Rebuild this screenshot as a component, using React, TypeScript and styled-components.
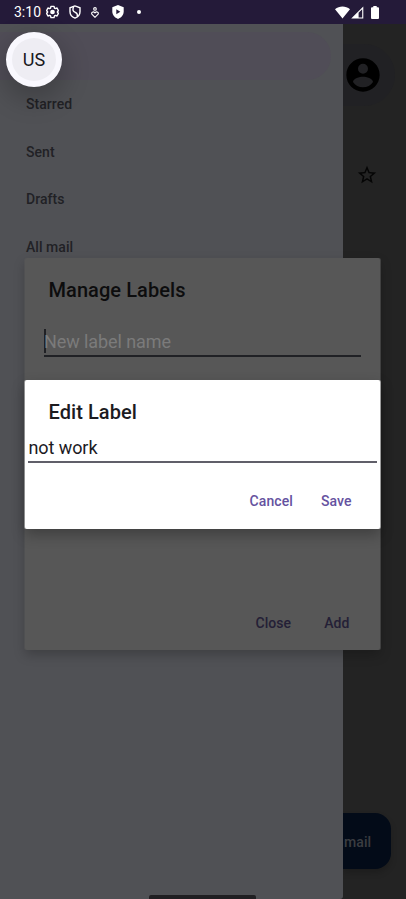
import React from "react";
import styled, { createGlobalStyle } from "styled-components";

const GlobalStyle = createGlobalStyle`
  *, *::before, *::after { box-sizing: border-box; }
  body { margin: 0; background: #232323; font-family: Roboto, "Noto Sans", sans-serif; overflow: hidden; }
`;

const Screen = styled.div`
  position: relative;
  width: 406px;
  height: 899px;
  overflow: hidden;
  display: grid;
  grid-template-rows: 24px 1fr;
`;

const StatusBar = styled.header`
  background: #241a39;
  color: #fff;
  display: flex;
  align-items: center;
  justify-content: space-between;
  padding: 0 27px 0 14px;
`;

const StatusGroup = styled.div<{ $gap: number }>`
  display: flex;
  align-items: center;
  gap: ${(p) => p.$gap}px;
  svg { display: block; }
`;

const Clock = styled.span`
  font-size: 14px;
  line-height: 24px;
  width: 32px;
  margin-right: -5px;
  white-space: nowrap;
`;

const Dot = styled.span`
  width: 4px;
  height: 4px;
  border-radius: 50%;
  background: #fff;
  margin-left: 0;
`;

const Body = styled.div`
  display: grid;
  grid-template-columns: 343px 63px;
  min-height: 0;
`;

const Drawer = styled.nav`
  position: relative;
  z-index: 1;
  background: #505155;
  border-radius: 0 0 3px 0;
  padding-top: 8px;
  display: flex;
  flex-direction: column;
`;

const ActiveItem = styled.div`
  height: 48px;
  margin-right: 12px;
  border-radius: 0 24px 24px 0;
  background: #504d57;
`;

const NavItem = styled.div`
  height: 47.7px;
  display: flex;
  align-items: center;
  padding-left: 26px;
  font-size: 14px;
  font-weight: 500;
  letter-spacing: 0.05px;
  color: #212125;
`;

const Mailbox = styled.main`
  background: #232323;
  display: flex;
  flex-direction: column;
  align-items: flex-start;
`;

const SearchEnd = styled.div`
  width: 52px;
  height: 62px;
  margin-top: 20px;
  border-radius: 0 31px 31px 0;
  background: #212124;
  display: flex;
  align-items: center;
  svg { display: block; }
`;

const StarSlot = styled.div`
  margin: 58px 0 0 13px;
  height: 22px;
  svg { display: block; }
`;

const Compose = styled.button`
  border: 0;
  margin: auto 0 30px;
  width: 48px;
  height: 56px;
  border-radius: 0 16px 16px 0;
  background: #030b18;
  color: #3b3d41;
  font: 500 14px/54px Roboto, sans-serif;
  letter-spacing: 0.1px;
  padding: 2px 0 0 1px;
  text-align: left;
  box-shadow: 0 4px 6px rgba(0, 0, 0, 0.18);
`;

const Avatar = styled.div`
  position: absolute;
  z-index: 2;
  left: 6px;
  top: 32px;
  width: 56px;
  height: 55px;
  border-radius: 50%;
  border: 6px solid #f9f8fe;
  background: #eeedf3;
  color: #18181c;
  display: flex;
  align-items: center;
  justify-content: center;
  font-size: 18px;
  box-shadow: 0 10px 26px 4px rgba(0, 0, 0, 0.2);
`;

const Dialog = styled.section<{ $top: number; $height: number; $dim?: boolean }>`
  position: absolute;
  z-index: ${(p) => (p.$dim ? 3 : 4)};
  left: 25px;
  top: ${(p) => p.$top}px;
  width: 355px;
  height: ${(p) => p.$height}px;
  display: flex;
  flex-direction: column;
  border-radius: 2px;
  background: ${(p) => (p.$dim ? "#575757" : "#fff")};
  color: ${(p) => (p.$dim ? "#0d0d0e" : "#1c1b1f")};
  box-shadow: ${(p) =>
    p.$dim
      ? "-1px 0 0 rgba(87, 87, 87, 0.5), 1px 0 0 rgba(87, 87, 87, 0.6), 0 5px 12px rgba(0, 0, 0, 0.22)"
      : "-1px 0 0 rgba(255, 255, 255, 0.4), 1px 0 0 rgba(255, 255, 255, 0.5), 0 6px 14px rgba(0, 0, 0, 0.28)"};
`;

const Title = styled.h2`
  margin: 20px 0 0 23.5px;
  font-size: 20px;
  line-height: 24px;
  font-weight: 500;
  letter-spacing: 0.07px;
`;

const ManageField = styled.div`
  margin: 23px 19px 0;
  height: 32px;
  border-bottom: 2px solid #202125;
  display: flex;
  color: #7b7b7b;
  font-size: 18px;
  line-height: 33px;
  letter-spacing: -0.08px;
`;

const Caret = styled.span`
  width: 2px;
  height: 24px;
  margin: 4px -2px 0 0;
  background: #202125;
`;

const EditField = styled.div`
  margin: 9px 3px 0;
  height: 30px;
  border-bottom: 2px solid #605f69;
  padding-left: 0.5px;
  font-size: 18px;
  line-height: 29px;
  letter-spacing: -0.08px;
`;

const Actions = styled.footer<{ $gap: number; $right: number; $drop?: number }>`
  margin-top: auto;
  height: 56px;
  display: flex;
  align-items: center;
  justify-content: flex-end;
  gap: ${(p) => p.$gap}px;
  padding-top: ${(p) => p.$drop ?? 0}px;
  padding-right: ${(p) => p.$right}px;
`;

const TextButton = styled.button<{ $dim?: boolean }>`
  border: 0;
  padding: 0;
  background: none;
  font: 500 14px/20px Roboto, sans-serif;
  letter-spacing: 0.08px;
  color: ${(p) => (p.$dim ? "#242036" : "#6552a0")};
`;

const GestureBar = styled.div`
  position: absolute;
  z-index: 2;
  left: 149px;
  bottom: 0;
  width: 107px;
  height: 4px;
  border-radius: 2px 2px 0 0;
  background: #201f22;
`;

const GearIcon = () => (
  <svg width="13" height="14" viewBox="1 1 22 22" fill="none" stroke="#fff" strokeWidth="2.4" strokeLinejoin="round">
    <path d="M9.400 2.500h5.200l.7 2.800 1.600.9 2.800-.9 2.300 4.200L20.200 12l1.800 2.500-2.300 4.200-2.800-.9-1.600.9-.7 2.800H9.400l-.7-2.800-1.600-.9-2.800.9L2 14.500 3.800 12 2 9.500l2.300-4.200 2.800.9 1.600-.9z" />
    <circle cx="12" cy="12" r="4" fill="#fff" stroke="none" />
  </svg>
);

const ShieldOffIcon = () => (
  <svg width="12" height="14" viewBox="0 0 12 14" fill="none" stroke="#fff" strokeWidth="1.4">
    <path d="M6 .9 1 2.800v4c0 3 2.100 5.300 5 6.300 2.900-1 5-3.300 5-6.300v-4z" />
    <path d="M4.600 1.600C3.300 5.400 4 6.300 6.300 7.300 8.500 8.300 8.800 9.300 8.300 11.600" />
  </svg>
);

const HeartPersonIcon = () => (
  <svg width="8" height="11" viewBox="0 0 8 11" fill="none" stroke="#fff" strokeWidth="1.100">
    <circle cx="4" cy="1.900" r="1.300" />
    <path d="M4 10.300 1.100 7.500C-.4 5.700 2.200 3.800 4 5.900 5.800 3.800 8.400 5.700 6.900 7.500z" />
  </svg>
);

const ShieldPlayIcon = () => (
  <svg width="12" height="14" viewBox="0 0 12 14">
    <path fill="#fff" d="M6 0 .3 2.200v4.400c0 3.500 2.400 6.300 5.700 7.300 3.300-1 5.700-3.800 5.700-7.300V2.200z" />
    <path fill="#241a39" d="M4.300 4.200v5l4-2.500z" />
  </svg>
);

const WifiIcon = () => (
  <svg width="15" height="13" viewBox="0 0 15 13">
    <path fill="#fff" d="M0 3.200C4.300-.5 10.700-.5 15 3.200L7.500 12.600z" />
  </svg>
);

const SignalIcon = () => (
  <svg width="13" height="13" viewBox="0 0 13 13">
    <path fill="#fff" fillRule="evenodd" d="M.2 12.500 12.300.4v12.100zM7.600 6.800v4.600h3.600V3.200z" />
  </svg>
);

const BatteryIcon = () => (
  <svg width="8" height="13" viewBox="0 0 8 13">
    <path fill="#fff" d="M2.300 0h3.400v1.300H7q1 0 1 1V12q0 1-1 1H1q-1 0-1-1V2.300q0-1 1-1h1.300z" />
  </svg>
);

const AccountIcon = () => (
  <svg width="40" height="40" viewBox="0 0 24 24" fill="#000">
    <path d="M12 2C6.480 2 2 6.480 2 12s4.480 10 10 10 10-4.480 10-10S17.520 2 12 2zm0 3.200a3 3 0 1 1 0 6 3 3 0 0 1 0-6zm0 14.200c-2.500 0-4.710-1.280-6-3.220.03-1.990 4-3.080 6-3.080s5.970 1.090 6 3.080c-1.290 1.940-3.500 3.220-6 3.220z" />
  </svg>
);

const StarIcon = () => (
  <svg width="22" height="22" viewBox="0 0 24 24" fill="#050505">
    <path d="M22 9.240l-7.190-.62L12 2 9.190 8.630 2 9.240l5.460 4.730L5.820 21 12 17.270 18.180 21l-1.630-7.030zM12 15.400l-3.760 2.270 1-4.280-3.320-2.880 4.380-.38L12 6.100l1.710 4.040 4.380.38-3.320 2.880 1 4.280z" />
  </svg>
);

export default function App() {
  return (
    <Screen>
      <GlobalStyle />
      <StatusBar>
        <StatusGroup $gap={5}>
          <Clock>3:10</Clock>
          <StatusGroup $gap={10}>
            <GearIcon />
            <ShieldOffIcon />
            <StatusGroup $gap={13}>
              <StatusGroup $gap={12.5}>
                <HeartPersonIcon />
                <ShieldPlayIcon />
              </StatusGroup>
              <Dot />
            </StatusGroup>
          </StatusGroup>
        </StatusGroup>
        <StatusGroup $gap={7}>
          <StatusGroup $gap={1}>
            <WifiIcon />
            <SignalIcon />
          </StatusGroup>
          <BatteryIcon />
        </StatusGroup>
      </StatusBar>

      <Body>
        <Drawer>
          <ActiveItem />
          {["Starred", "Sent", "Drafts", "All mail"].map((name) => (
            <NavItem key={name}>{name}</NavItem>
          ))}
        </Drawer>
        <Mailbox>
          <SearchEnd>
            <AccountIcon />
          </SearchEnd>
          <StarSlot>
            <StarIcon />
          </StarSlot>
          <Compose>mail</Compose>
        </Mailbox>
      </Body>

      <Avatar>US</Avatar>
      <GestureBar />

      <Dialog $top={258} $height={392} $dim>
        <Title>Manage Labels</Title>
        <ManageField>
          <Caret />
          New label name
        </ManageField>
        <Actions $gap={33} $right={30.5} $drop={2}>
          <TextButton $dim>Close</TextButton>
          <TextButton $dim>Add</TextButton>
        </Actions>
      </Dialog>

      <Dialog $top={380} $height={149}>
        <Title>Edit Label</Title>
        <EditField>not work</EditField>
        <Actions $gap={28} $right={28.5}>
          <TextButton>Cancel</TextButton>
          <TextButton>Save</TextButton>
        </Actions>
      </Dialog>
    </Screen>
  );
}
